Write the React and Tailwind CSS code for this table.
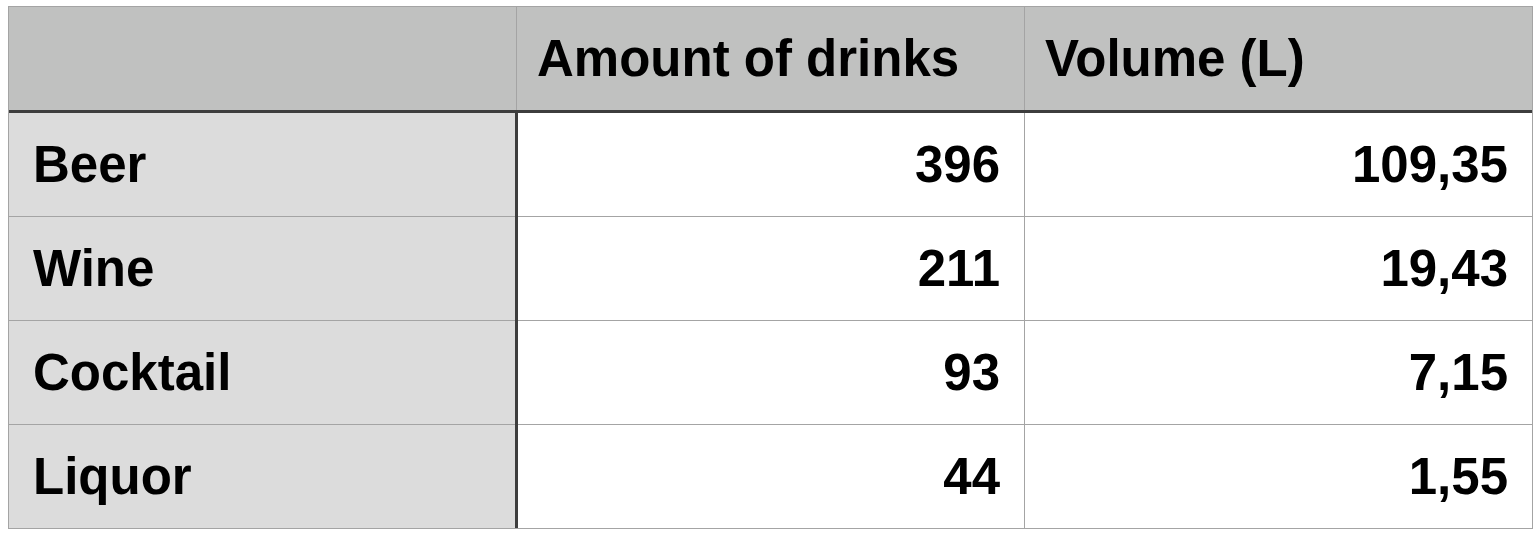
const rows = [
  { name: "Beer", amount: "396", volume: "109,35" },
  { name: "Wine", amount: "211", volume: "19,43" },
  { name: "Cocktail", amount: "93", volume: "7,15" },
  { name: "Liquor", amount: "44", volume: "1,55" },
];

export default function App() {
  return (
    <div className="min-h-screen bg-white pt-[6px] pl-2 font-['Liberation_Sans',Arial,sans-serif] font-bold text-[51px] leading-none text-black">
      <div className="w-[1525px] border border-[#a4a4a4]">
        {/* header */}
        <div className="flex h-[106px] bg-[#c0c1c0] border-b-[3px] border-[#3d3d3d]">
          <div className="w-[508px] border-r border-[#a4a4a4]" />
          <div className="w-[508px] border-r border-[#a4a4a4] flex items-center pl-5">
            Amount of drinks
          </div>
          <div className="flex-1 flex items-center pl-5">Volume (L)</div>
        </div>

        {/* body */}
        <div className="flex">
          <div className="w-[509px] bg-[#dcdcdc] border-r-[3px] border-[#3d3d3d]">
            {rows.map((r, i) => (
              <div
                key={r.name}
                className={
                  i < rows.length - 1
                    ? "h-[104px] border-b border-[#a4a4a4] flex items-center pl-6"
                    : "h-[103px] flex items-center pl-6"
                }
              >
                {r.name}
              </div>
            ))}
          </div>
          <div className="flex-1">
            {rows.map((r, i) => (
              <div
                key={r.name}
                className={
                  i < rows.length - 1
                    ? "flex h-[104px] border-b border-[#a4a4a4]"
                    : "flex h-[103px]"
                }
              >
                <div className="w-[507px] border-r border-[#a4a4a4] flex items-center justify-end pr-6">
                  {r.amount}
                </div>
                <div className="flex-1 flex items-center justify-end pr-6">
                  {r.volume}
                </div>
              </div>
            ))}
          </div>
        </div>
      </div>
    </div>
  );
}
